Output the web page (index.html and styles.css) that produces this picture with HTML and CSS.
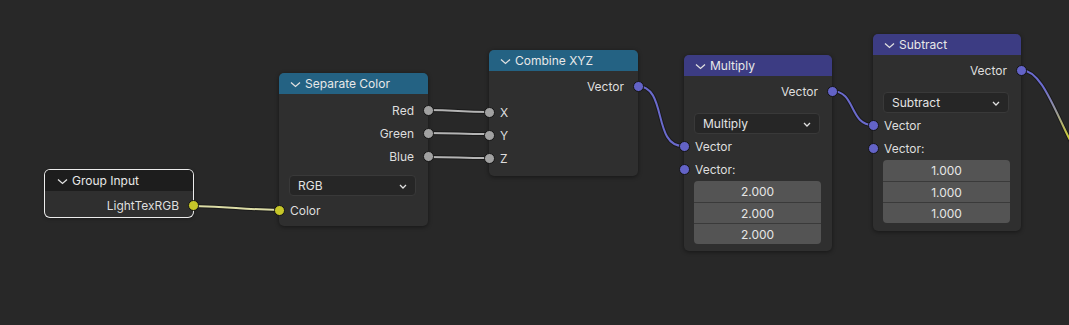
FILE: index.html
```html
<!DOCTYPE html>
<html lang="en">

<head>
    <meta charset="UTF-8">
    <title>Node Editor</title>
    <link rel="stylesheet" href="styles.css">
</head>

<body>

    <div class="canvas">

        <!-- links -->
        <svg class="links" width="1069" height="325" viewBox="0 0 1069 325">
            <defs>
                <linearGradient id="vecToCol" x1="0" y1="70" x2="0" y2="140" gradientUnits="userSpaceOnUse">
                    <stop offset="0.25" stop-color="#6b6bcf" />
                    <stop offset="0.6" stop-color="#9a9a9a" />
                    <stop offset="1" stop-color="#d2d22e" />
                </linearGradient>
            </defs>
            <g class="link-shadow">
                <path d="M193,206 C236,207 236,209 279,210" />
                <path d="M427,110 C458,110 458,112 489,112" />
                <path d="M427,133 C458,133 458,134 489,134" />
                <path d="M427,157 C458,157 458,158 489,158" />
                <path d="M637,86 C668,86 652,146 683,146" />
                <path d="M832,91 C856,91 849,125 873,125" />
                <path d="M1021,70 C1042,70 1054,110 1074,148" />
            </g>
            <path class="link yellow" d="M193,206 C236,207 236,209 279,210" />
            <path class="link grey" d="M427,110 C458,110 458,112 489,112" />
            <path class="link grey" d="M427,133 C458,133 458,134 489,134" />
            <path class="link grey" d="M427,157 C458,157 458,158 489,158" />
            <path class="link purple" d="M637,86 C668,86 652,146 683,146" />
            <path class="link purple" d="M832,91 C856,91 849,125 873,125" />
            <path class="link" stroke="url(#vecToCol)" d="M1021,70 C1042,70 1054,110 1074,148" />
        </svg>

        <!-- Group Input -->
        <div class="node n-group selected">
            <div class="node-header dark">
                <svg class="chev" width="11" height="7" viewBox="0 0 11 7"><path d="M1,1.5 L5.5,5.5 L10,1.5" /></svg>
                <span>Group Input</span>
            </div>
            <div class="node-body pad-group">
                <div class="row out">LightTexRGB<span class="socket yellow"></span></div>
            </div>
        </div>

        <!-- Separate Color -->
        <div class="node n-separate">
            <div class="node-header blue">
                <svg class="chev" width="11" height="7" viewBox="0 0 11 7"><path d="M1,1.5 L5.5,5.5 L10,1.5" /></svg>
                <span>Separate Color</span>
            </div>
            <div class="node-body pad-separate">
                <div class="row out">Red<span class="socket grey"></span></div>
                <div class="row out">Green<span class="socket grey"></span></div>
                <div class="row out">Blue<span class="socket grey"></span></div>
                <div class="dropdown gap-sep">
                    <span>RGB</span>
                    <svg class="dd-chev" width="8" height="5" viewBox="0 0 8 5"><path d="M1,1 L4,4 L7,1" /></svg>
                </div>
                <div class="row in"><span class="socket yellow"></span>Color</div>
            </div>
        </div>

        <!-- Combine XYZ -->
        <div class="node n-combine">
            <div class="node-header blue">
                <svg class="chev" width="11" height="7" viewBox="0 0 11 7"><path d="M1,1.5 L5.5,5.5 L10,1.5" /></svg>
                <span>Combine XYZ</span>
            </div>
            <div class="node-body pad-combine">
                <div class="row out">Vector<span class="socket purple"></span></div>
                <div class="row in first-in"><span class="socket grey"></span>X</div>
                <div class="row in"><span class="socket grey"></span>Y</div>
                <div class="row in"><span class="socket grey"></span>Z</div>
            </div>
        </div>

        <!-- Multiply -->
        <div class="node n-multiply">
            <div class="node-header violet">
                <svg class="chev" width="11" height="7" viewBox="0 0 11 7"><path d="M1,1.5 L5.5,5.5 L10,1.5" /></svg>
                <span>Multiply</span>
            </div>
            <div class="node-body pad-math">
                <div class="row out">Vector<span class="socket purple"></span></div>
                <div class="dropdown gap-math">
                    <span>Multiply</span>
                    <svg class="dd-chev" width="8" height="5" viewBox="0 0 8 5"><path d="M1,1 L4,4 L7,1" /></svg>
                </div>
                <div class="row in"><span class="socket purple"></span>Vector</div>
                <div class="row in"><span class="socket purple"></span>Vector:</div>
                <div class="fields">
                    <div class="field">2.000</div>
                    <div class="field">2.000</div>
                    <div class="field">2.000</div>
                </div>
            </div>
        </div>

        <!-- Subtract -->
        <div class="node n-subtract">
            <div class="node-header violet">
                <svg class="chev" width="11" height="7" viewBox="0 0 11 7"><path d="M1,1.5 L5.5,5.5 L10,1.5" /></svg>
                <span>Subtract</span>
            </div>
            <div class="node-body pad-math">
                <div class="row out">Vector<span class="socket purple"></span></div>
                <div class="dropdown gap-math">
                    <span>Subtract</span>
                    <svg class="dd-chev" width="8" height="5" viewBox="0 0 8 5"><path d="M1,1 L4,4 L7,1" /></svg>
                </div>
                <div class="row in"><span class="socket purple"></span>Vector</div>
                <div class="row in"><span class="socket purple"></span>Vector:</div>
                <div class="fields">
                    <div class="field">1.000</div>
                    <div class="field">1.000</div>
                    <div class="field">1.000</div>
                </div>
            </div>
        </div>

    </div>

</body>

</html>
```

FILE: styles.css
```css
* {
    box-sizing: border-box;
}

body {
    margin: 0;
    background-color: #282828;
    font-family: Inter, "Noto Sans", sans-serif;
    font-size: 12px;
    color: #dedede;
    overflow: hidden;
}

.canvas {
    position: relative;
    width: 1069px;
    height: 325px;
    background-color: #282828;
}

/* ---------- links ---------- */

.links {
    position: absolute;
    left: 0;
    top: 0;
}

.link-shadow path {
    fill: none;
    stroke: #161616;
    stroke-width: 4;
    opacity: 0.8;
}

.link {
    fill: none;
    stroke-width: 2;
}

.link.yellow {
    stroke: #dcdca6;
}

.link.grey {
    stroke: #b4b4b4;
}

.link.purple {
    stroke: #6a6acc;
}

/* ---------- nodes ---------- */

.node {
    position: absolute;
    width: 149px;
    background-color: #2f2f2f;
    border-radius: 5px;
    box-shadow: 0 1px 4px rgba(0, 0, 0, 0.45);
}

.node.selected {
    box-shadow: 0 0 0 1px #ececec, 0 1px 4px rgba(0, 0, 0, 0.45);
}

.n-group {
    left: 45px;
    top: 170px;
    width: 148px;
}

.n-separate {
    left: 279px;
    top: 73px;
    height: 153px;
}

.n-combine {
    left: 489px;
    top: 50px;
    height: 126px;
}

.n-multiply {
    left: 684px;
    top: 55px;
    width: 148px;
    height: 196px;
}

.n-subtract {
    left: 873px;
    top: 34px;
    width: 148px;
    height: 197px;
}

.node-header {
    display: flex;
    align-items: center;
    height: 21px;
    padding-left: 11px;
    gap: 4px;
    border-radius: 5px 5px 0 0;
    color: #e8e8e8;
}

.node-header.dark {
    background-color: #1d1d1d;
    padding-left: 12px;
}

.node-header.blue {
    background-color: #246283;
}

.node-header.violet {
    background-color: #3c3c83;
}

.chev {
    flex-shrink: 0;
    margin-top: 1px;
}

.chev path,
.dd-chev path {
    fill: none;
    stroke: #e0e0e0;
    stroke-width: 1.3;
}

.node-body {
    display: flex;
    flex-direction: column;
}

.pad-group {
    padding-top: 3px;
}

.pad-separate {
    padding-top: 5px;
}

.pad-combine {
    padding-top: 4px;
}

.pad-math {
    padding-top: 4px;
}

.row {
    position: relative;
    display: flex;
    align-items: center;
    height: 23px;
}

.row.out {
    justify-content: flex-end;
    padding-right: 14px;
}

.row.in {
    padding-left: 11px;
}

.row.first-in {
    margin-top: 3px;
}

.socket {
    position: absolute;
    top: 6px;
    width: 11px;
    height: 11px;
    border-radius: 50%;
    border: 1px solid #141414;
}

.row.out .socket {
    right: -6px;
}

.row.in .socket {
    left: -5px;
}

.socket.yellow {
    background-color: #c7c729;
}

.socket.grey {
    background-color: #a1a1a1;
}

.socket.purple {
    background-color: #6363c7;
}

/* ---------- widgets ---------- */

.dropdown {
    display: flex;
    align-items: center;
    justify-content: space-between;
    height: 21px;
    margin: 0 12px 0 10px;
    padding: 0 8px 0 8px;
    background-color: #262626;
    border: 1px solid #393939;
    border-radius: 4px;
    color: #e4e4e4;
}

.gap-sep {
    margin-top: 7px;
    margin-bottom: 3px;
}

.gap-math {
    margin-top: 10px;
    margin-bottom: 1px;
}

.dd-chev {
    margin-top: 1px;
}

.fields {
    display: flex;
    flex-direction: column;
    margin: 0 11px 0 10px;
    border-radius: 4px;
    overflow: hidden;
}

.field {
    height: 21px;
    display: flex;
    align-items: center;
    justify-content: center;
    background-color: #545454;
    color: #e6e6e6;
    border-top: 1px solid #3a3a3a;
}

.field:first-child {
    border-top: none;
}
```
